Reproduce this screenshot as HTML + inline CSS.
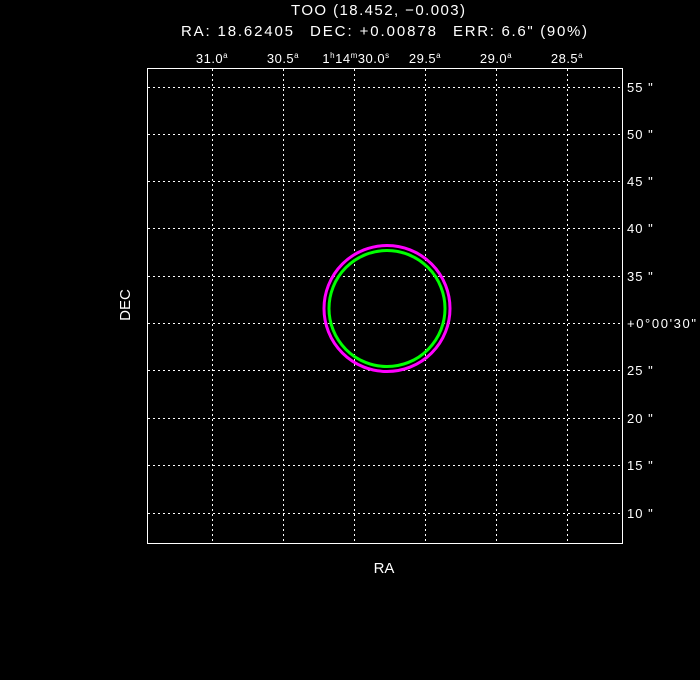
<!DOCTYPE html>
<html><head><style>
html,body{margin:0;padding:0;background:#000;}
svg{display:block}
text{font-family:"Liberation Sans",sans-serif;fill:#fff;}
</style></head><body>
<svg width="700" height="680" xmlns="http://www.w3.org/2000/svg">
<rect width="700" height="680" fill="#000"/>
<text x="291" y="15" font-size="15" textLength="174" lengthAdjust="spacing">TOO (18.452, −0.003)</text>
<g font-size="15">
<text x="181" y="36" textLength="112" lengthAdjust="spacing">RA: 18.62405</text>
<text x="310" y="36" textLength="126" lengthAdjust="spacing">DEC: +0.00878</text>
<text x="453" y="36" textLength="134" lengthAdjust="spacing">ERR: 6.6" (90%)</text>
</g>
<g font-size="13" text-anchor="middle" letter-spacing="0.5">
<text x="212" y="63">31.0<tspan font-size="8" dy="-5">a</tspan></text>
<text x="283" y="63">30.5<tspan font-size="8" dy="-5">a</tspan></text>
<text x="356" y="63">1<tspan font-size="8" dy="-5">h</tspan><tspan dy="5">14</tspan><tspan font-size="8" dy="-5">m</tspan><tspan dy="5">30.0</tspan><tspan font-size="8" dy="-5">s</tspan></text>
<text x="425" y="63">29.5<tspan font-size="8" dy="-5">a</tspan></text>
<text x="496" y="63">29.0<tspan font-size="8" dy="-5">a</tspan></text>
<text x="567" y="63">28.5<tspan font-size="8" dy="-5">a</tspan></text>
</g>
<g stroke="#fff" stroke-width="1" stroke-dasharray="2,3" fill="none">
<path d="M212.5 69V543M283.5 69V543M354.5 69V543M425.5 69V543M496.5 69V543M567.5 69V543"/>
<path d="M148 87.5H622M148 134.5H622M148 181.5H622M148 228.5H622M148 276.5H622M148 323.5H622M148 370.5H622M148 418.5H622M148 465.5H622M148 513.5H622"/>
</g>
<rect x="147.5" y="68.5" width="475" height="475" fill="none" stroke="#fff" stroke-width="1"/>
<g font-size="13" letter-spacing="1">
<text x="627" y="92">55 "</text>
<text x="627" y="139">50 "</text>
<text x="627" y="186">45 "</text>
<text x="627" y="233">40 "</text>
<text x="627" y="281">35 "</text>
<text x="627" y="328" textLength="70" lengthAdjust="spacing">+0°00'30"</text>
<text x="627" y="375">25 "</text>
<text x="627" y="423">20 "</text>
<text x="627" y="470">15 "</text>
<text x="627" y="518">10 "</text>
</g>
<circle cx="387" cy="308.5" r="63" fill="none" stroke="#ff00ff" stroke-width="3"/>
<circle cx="387" cy="308.5" r="58" fill="none" stroke="#00ff00" stroke-width="3"/>
<text x="384" y="573" font-size="15" text-anchor="middle">RA</text>
<text transform="translate(130,305) rotate(-90)" font-size="15" text-anchor="middle">DEC</text>
</svg>
</body></html>
